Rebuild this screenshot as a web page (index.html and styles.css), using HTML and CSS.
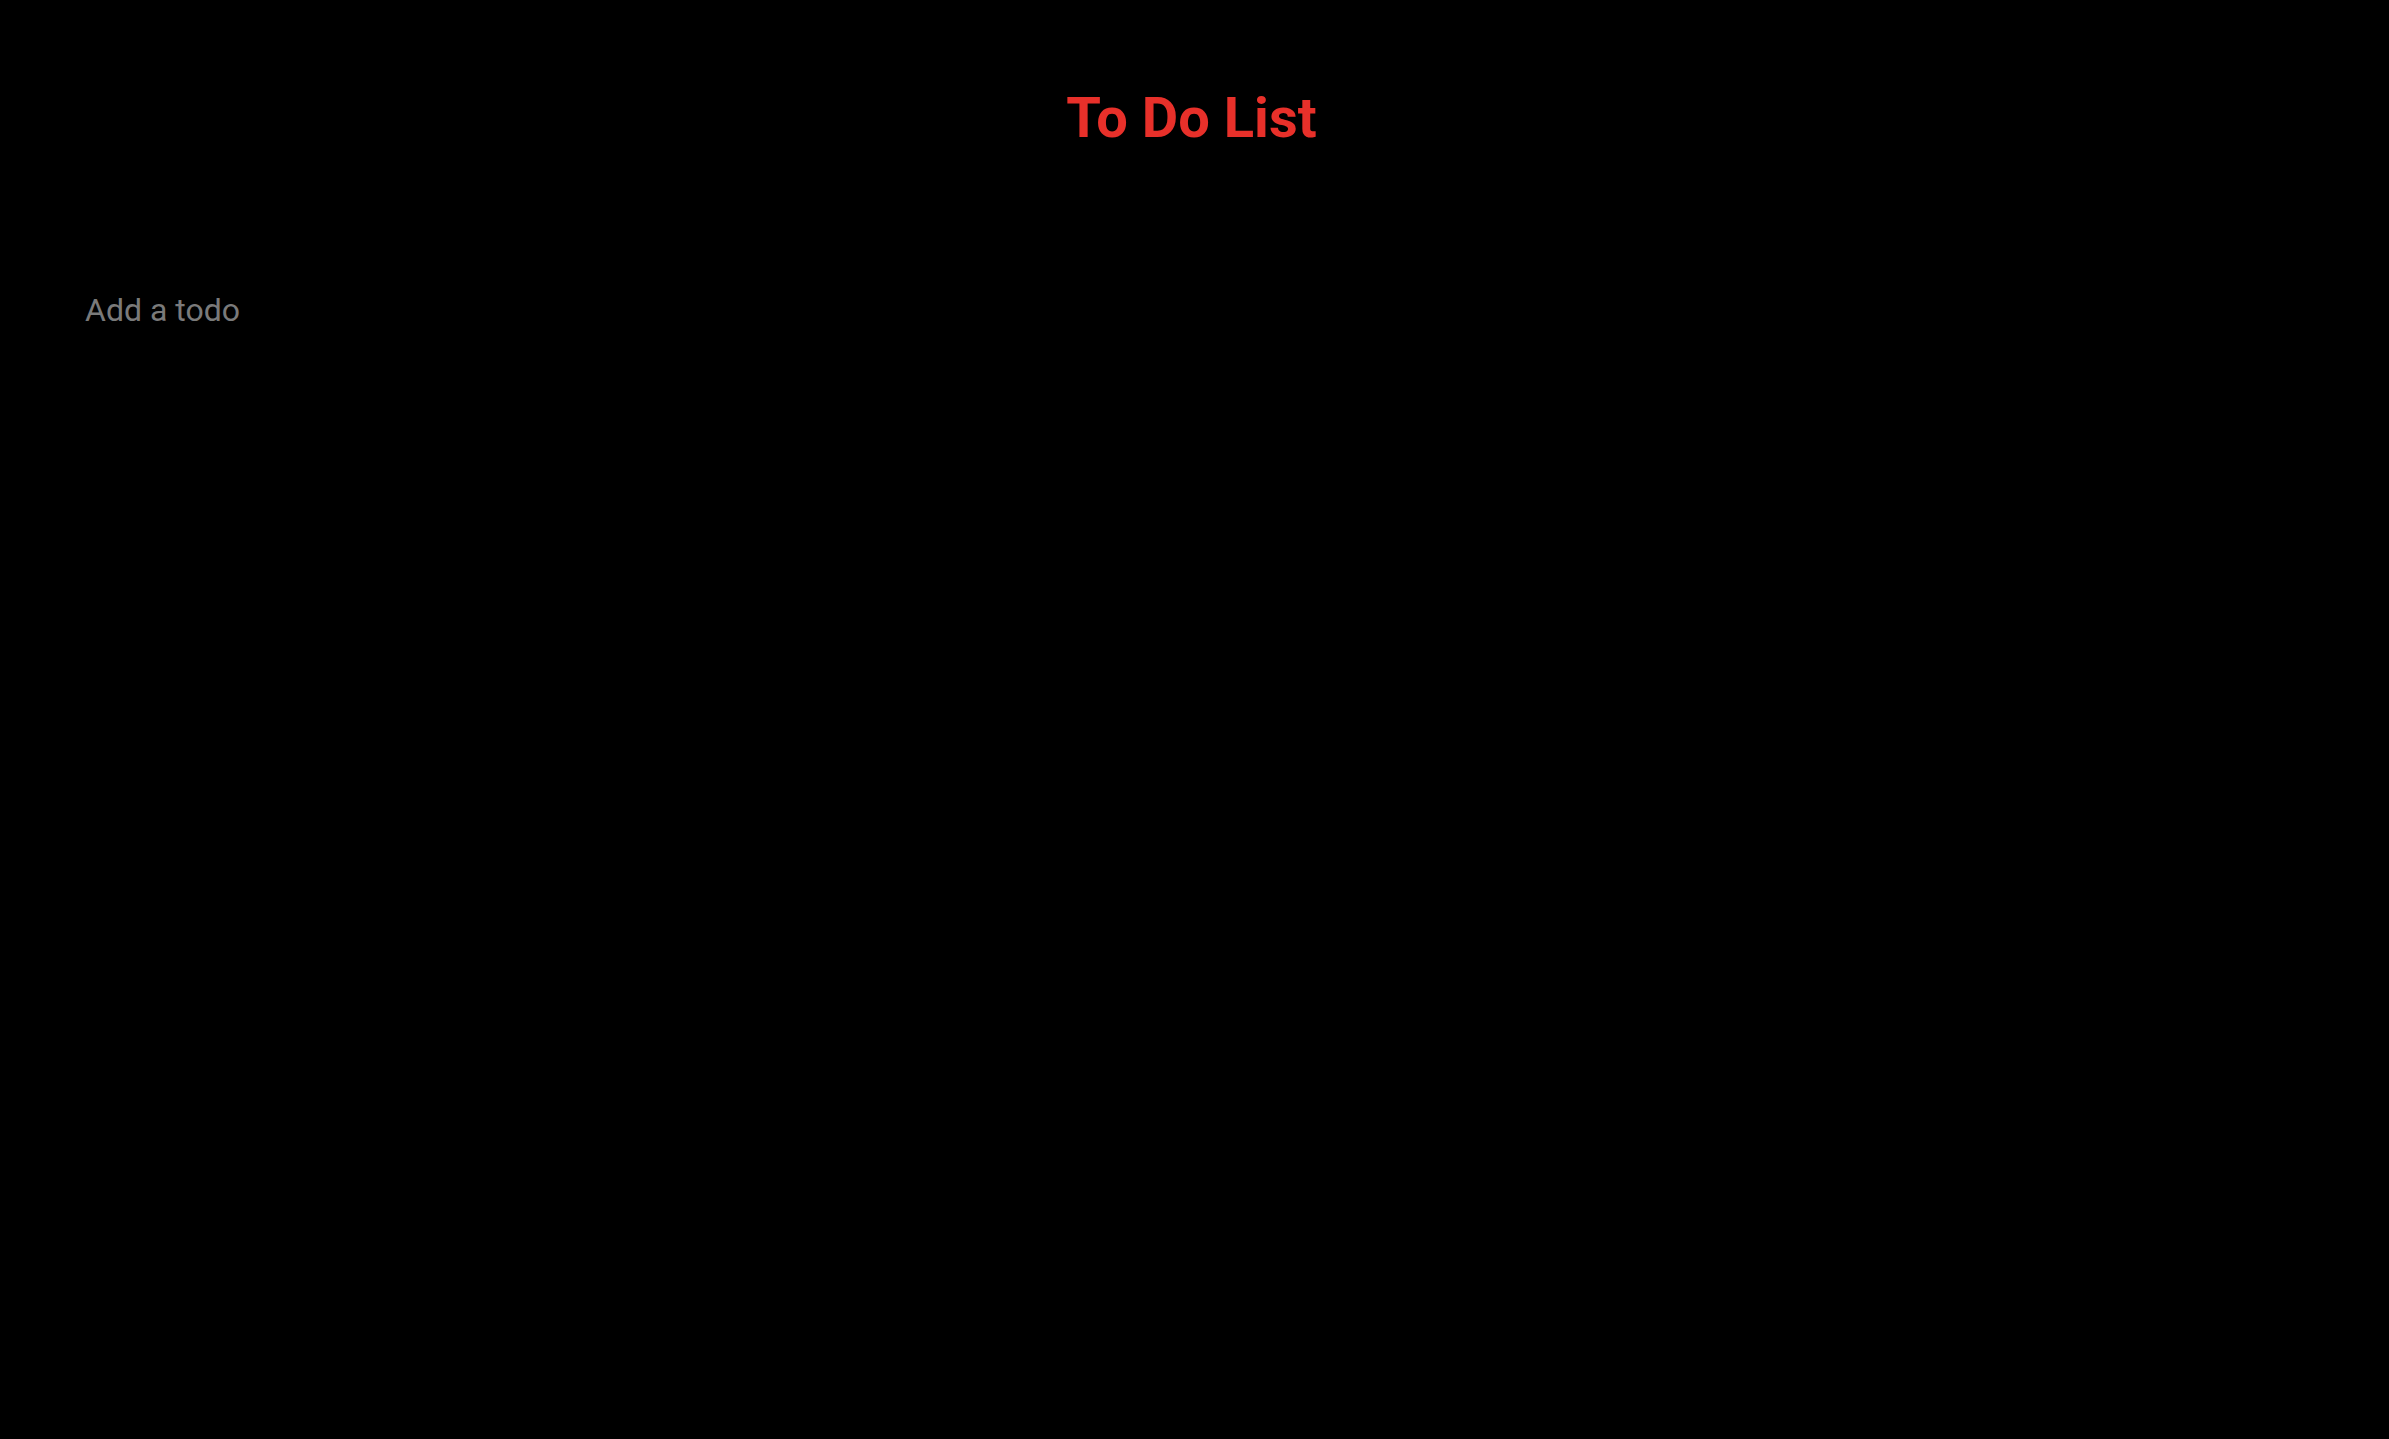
FILE: index.html
```html
<!DOCTYPE html>
<html lang="en">
<head>
<meta charset="utf-8">
<title>To Do List</title>
<link rel="stylesheet" href="styles.css">
</head>
<body>
<main class="app">
  <h1 class="title">To Do List</h1>
  <form class="todo-form">
    <input class="todo-input" type="text" placeholder="Add a todo">
  </form>
</main>
</body>
</html>
```

FILE: styles.css
```css
html, body {
  margin: 0;
  padding: 0;
  background: #000;
  height: 100%;
}
body {
  font-family: Roboto, "Liberation Sans", sans-serif;
}
.app {
  display: flex;
  flex-direction: column;
  padding: 0 91px 0 85px;
}
.title {
  margin: 0;
  padding-top: 84px;
  text-align: center;
  font-size: 56px;
  line-height: 68px;
  font-weight: 700;
  color: #e8302a;
}
.todo-form {
  display: flex;
  margin-top: 138px;
}
.todo-input {
  flex: 1;
  background: transparent;
  border: none;
  outline: none;
  padding: 0;
  font-family: Roboto, "Liberation Sans", sans-serif;
  font-size: 32px;
  line-height: 40px;
  color: #ddd;
}
.todo-input::placeholder {
  color: #7a7a7a;
}
```
